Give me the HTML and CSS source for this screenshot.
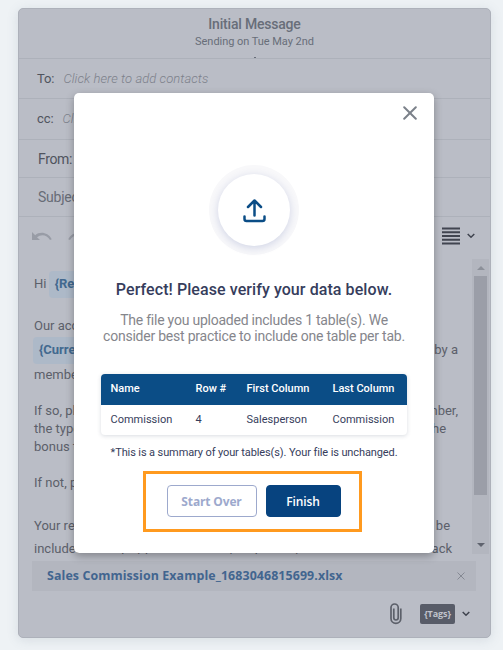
FILE: index.html
```
<!DOCTYPE html>
<html lang="en">
<head>
    <meta charset="UTF-8">
    <title>Initial Message</title>
    <link rel="stylesheet" href="styles.css">
</head>
<body>
    <div class="composer">
        <header class="header">
            <h1>Initial Message</h1>
            <p>Sending on Tue May 2nd</p>
            <i class="mark"></i>
        </header>
        <div class="field to">To: <em>Click here to add contacts</em></div>
        <div class="field cc">cc: <em>Click here</em></div>
        <div class="field from">From:</div>
        <div class="field subject">Subject:</div>
        <div class="toolbar">
            <svg class="undo" width="20" height="9" viewBox="0 0 20 9"><path d="M0 0v8h8L5 5.2C9 2 15 2.500 18 8l1.800-.8C16 .2 8-1 3.200 3.200z"/></svg>
            <svg class="redo" width="20" height="9" viewBox="0 0 20 9"><path d="M20 0v8h-8l3-2.800C11 2 5 2.500 2 8L.2 7.200C4 .2 12-1 16.800 3.200z"/></svg>
            <svg class="lines" width="18" height="18" viewBox="0 0 18 18"><path d="M0 1.500h18M0 5.300h18M0 9h18M0 12.700h18M0 16.500h18"/></svg>
            <svg class="chevron" width="8" height="6" viewBox="0 0 8 6"><path d="M.7 1 4 4.300 7.300 1"/></svg>
        </div>
        <div class="editor">
            <div class="text">
                <p class="line hi"><span>Hi <b class="tag">{Recipient}</b></span></p>
                <p class="line our"><span>Our accounting</span></p>
                <p class="line current"><span><b class="tag">{Current}</b></span><span>by a</span></p>
                <p class="line member"><span>member</span></p>
                <p class="line so"><span>If so, please</span><span>member,</span></p>
                <p class="line type"><span>the type</span><span class="end-the">the</span></p>
                <p class="line bonus"><span>bonus to</span></p>
                <p class="line not"><span>If not, please</span></p>
                <p class="line reply"><span>Your reply</span><span class="end-be">be</span></p>
                <p class="line last"><span>included in the pay period and may be paid if you</span><span class="end-back">back</span></p>
            </div>
            <div class="scrollbar">
                <i class="up"></i>
                <div class="thumb"></div>
                <i class="down"></i>
            </div>
        </div>
        <div class="attachment">
            <span>Sales Commission Example_1683046815699.xlsx</span>
            <svg width="8" height="8" viewBox="0 0 8 8"><path d="m.5.5 7 7m0-7-7 7"/></svg>
        </div>
        <footer class="footer">
            <svg class="clip" width="12" height="22" viewBox="0 0 12 22"><path d="M10.800 5.500v10a4.900 4.900 0 0 1-9.800 0V4.600a3.600 3.600 0 0 1 7.200 0v10.200a2.200 2.200 0 0 1-4.400 0V5.500"/></svg>
            <span class="tags">{Tags}</span>
            <svg class="chevron" width="8" height="6" viewBox="0 0 8 6"><path d="M.7 1 4 4.300 7.300 1"/></svg>
        </footer>
    </div>

    <div class="modal">
        <svg class="close" width="14" height="14" viewBox="0 0 14 14"><path d="m1.200 1.200 11.600 11.600m0-11.600L1.200 12.800"/></svg>
        <div class="upload">
            <svg width="24" height="24" viewBox="0 0 24 24"><path d="M12.500 16.500V2M6 8l6.500-6.500L19 8M2.500 17.500V20q0 2 2 2h16q2 0 2-2v-2.500"/></svg>
        </div>
        <h2>Perfect! Please verify your data below.</h2>
        <p class="info">The file you uploaded includes 1 table(s). We<br>consider best practice to include one table per tab.</p>
        <table class="summary">
            <thead>
                <tr><th>Name</th><th>Row #</th><th>First Column</th><th>Last Column</th></tr>
            </thead>
            <tbody>
                <tr><td>Commission</td><td>4</td><td>Salesperson</td><td>Commission</td></tr>
            </tbody>
        </table>
        <p class="note">*This is a summary of your tables(s). Your file is unchanged.</p>
        <div class="actions">
            <button class="btn start">Start Over</button>
            <button class="btn finish">Finish</button>
        </div>
    </div>
</body>
</html>
```
FILE: styles.css
```
* {
    box-sizing: border-box;
}
body {
    margin: 0;
    height: 650px;
    padding: 8px 12px 12px 18px;
    overflow: hidden;
    background: #eef2f5;
    font-family: Roboto, "Liberation Sans", sans-serif;
}
h1, h2, p {
    margin: 0;
    font-weight: normal;
}
svg {
    display: block;
    fill: none;
    flex: none;
}
.composer {
    width: 473px;
    height: 630px;
    border: 1px solid #adb1ba;
    border-radius: 5px;
    background: #babdc6;
    box-shadow: 0 2px 12px rgba(80, 100, 120, .15);
    color: #5c606a;
    overflow: hidden;
}
.header {
    height: 50px;
    padding-top: 7px;
    border-bottom: 1px solid #adb1ba;
    text-align: center;
    color: #686e79;
}
.header h1 {
    font-size: 14px;
    line-height: 17px;
    font-weight: 500;
    letter-spacing: -.2px;
}
.header p {
    font-size: 11px;
    line-height: 17px;
    letter-spacing: -.04px;
}
.mark {
    display: block;
    width: 2px;
    height: 1px;
    margin: 7px auto 0;
    background: #686e79;
}
.field {
    display: flex;
    align-items: center;
    height: 40px;
    padding-left: 18px;
    border-bottom: 1px solid #adb1ba;
    font-size: 13px;
    letter-spacing: -.1px;
    color: #50545e;
}
.field em {
    margin-left: 9px;
    color: #7d818b;
    font-weight: 300;
    letter-spacing: .07px;
}
.cc {
    height: 41px;
    padding-bottom: 2px;
}
.from {
    height: 38px;
    padding-left: 19px;
    font-size: 14px;
    letter-spacing: -.35px;
}
.subject {
    height: 39px;
    padding-left: 19px;
    font-size: 14px;
    letter-spacing: -.25px;
    color: #686c76;
}
.toolbar {
    display: flex;
    align-items: center;
    height: 42px;
    padding: 0 15px 4px 13px;
}
.undo, .redo {
    fill: #989ca6;
}
.redo {
    margin-left: 16px;
}
.lines {
    margin-left: auto;
    stroke: #414550;
    stroke-width: 2;
}
.chevron {
    margin-left: 7px;
    stroke: #414550;
    stroke-width: 1.500;
}
.editor {
    display: flex;
    height: 295px;
    padding-right: 1px;
}
.text {
    width: 454px;
    height: 295px;
    padding: 13px 14px 0 15px;
    font-size: 13px;
    overflow: hidden;
}
.line {
    display: flex;
    justify-content: space-between;
    height: 18px;
    line-height: 18px;
    white-space: nowrap;
}
.tag {
    display: inline-block;
    height: 27px;
    margin-left: -1px;
    padding: 0 6px;
    border-radius: 4px;
    background: #adb9c8;
    color: #42698f;
    font-size: 13px;
    line-height: 26px;
}
.hi {
    height: 27px;
    margin-top: -1px;
    line-height: 26px;
}
.our {
    margin-top: 19px;
}
.current {
    height: 27px;
    line-height: 26px;
    margin-top: 2px;
}
.member {
    margin-top: 2px;
}
.so, .not {
    margin-top: 18px;
}
.reply {
    margin-top: 25px;
}
.last {
    margin-top: 5px;
}
.end-the {
    padding-right: 12px;
}
.end-be {
    padding-right: 8px;
}
.end-back {
    padding-right: 6px;
}
.scrollbar {
    display: flex;
    flex-direction: column;
    align-items: center;
    width: 17px;
    background: #b3b6bf;
}
.up, .down {
    width: 0;
    height: 0;
    border: 4px solid transparent;
}
.up {
    margin-top: 3px;
    border-bottom-color: #8c9099;
}
.thumb {
    width: 13px;
    height: 219px;
    margin-top: 6px;
    background: #9b9ea8;
}
.down {
    margin-top: 48px;
    border-top-color: #5f636e;
}
.attachment {
    display: flex;
    align-items: center;
    justify-content: space-between;
    width: 444px;
    height: 30px;
    margin: 7px 0 0 13px;
    padding: 0 11px 1px 15px;
    background: #b3b6bf;
    color: #42658f;
    font: bold 12.400px "Open Sans", sans-serif;
    letter-spacing: .1px;
}
.attachment svg {
    stroke: #858993;
}
.footer {
    display: flex;
    align-items: center;
    justify-content: flex-end;
    height: 47px;
    padding: 0 20px 1px 0;
}
.clip {
    margin-right: 18px;
    stroke: #5c606a;
    stroke-width: 1.700;
}
.tags {
    width: 35px;
    height: 20px;
    border-radius: 2px;
    background: #585c68;
    color: #c0c3cc;
    font: bold 9px/20px "Open Sans", sans-serif;
    text-align: center;
    letter-spacing: -.1px;
}

/* Confirmation dialog over the composer */
.modal {
    position: absolute;
    left: 74px;
    top: 93px;
    display: flex;
    flex-direction: column;
    align-items: center;
    width: 360px;
    height: 460px;
    border-radius: 5px;
    background: #fff;
    box-shadow: 0 3px 8px rgba(0, 0, 0, .3);
    color: #363d5c;
}
.close {
    align-self: flex-end;
    margin: 13px 17px 0 0;
    stroke: #7b818a;
    stroke-width: 2;
    stroke-linecap: round;
}
.upload {
    display: flex;
    align-items: center;
    justify-content: center;
    width: 72px;
    height: 72px;
    margin-top: 54px;
    border-radius: 50%;
    background: #fff;
    box-shadow: 0 2px 8px rgba(50, 70, 150, .2), 0 0 0 9px #f8f8fa;
}
.upload svg {
    margin-top: 2px;
    stroke: #0b4d86;
    stroke-width: 2.500;
    stroke-linecap: round;
    stroke-linejoin: round;
}
.modal h2 {
    margin-top: 33px;
    font-size: 16px;
    line-height: 22px;
    font-weight: 500;
    letter-spacing: .08px;
}
.info {
    margin-top: 11px;
    color: #85868c;
    font-size: 14px;
    line-height: 16px;
    letter-spacing: -.23px;
    text-align: center;
    white-space: nowrap;
}
.summary {
    width: 306px;
    margin-top: 30px;
    border-spacing: 0;
    border-radius: 4px;
    table-layout: fixed;
    overflow: hidden;
    box-shadow: 0 1px 4px rgba(30, 50, 80, .17);
    font-size: 11px;
    text-align: left;
}
.summary th, .summary td {
    height: 30px;
    padding: 0 0 2px 9.500px;
    white-space: nowrap;
}
.summary th {
    height: 31px;
    background: #0b4d86;
    color: #fff;
    font-weight: 500;
}
.summary th:nth-child(1) {
    width: 85px;
}
.summary th:nth-child(2) {
    width: 51px;
}
.summary th:nth-child(3) {
    width: 86px;
}
.note {
    margin-top: 10px;
    font-size: 11px;
    line-height: 15px;
    letter-spacing: -.11px;
}
.actions {
    display: flex;
    justify-content: center;
    gap: 9px;
    width: 219px;
    height: 61px;
    margin: 11px 3px 0 0;
    padding: 11px 0 0 2px;
    border: 3px solid #ff9a1f;
}
.btn {
    height: 32px;
    padding: 0;
    border: 1px solid #9da9cd;
    border-radius: 4px;
    background: #fff;
    color: #9da9cd;
    font: bold 12px "Open Sans", sans-serif;
    letter-spacing: -.15px;
}
.start {
    width: 90px;
}
.finish {
    width: 75px;
    border-color: #07437f;
    background: #07437f;
    color: #fff;
    font-weight: 600;
}
```
